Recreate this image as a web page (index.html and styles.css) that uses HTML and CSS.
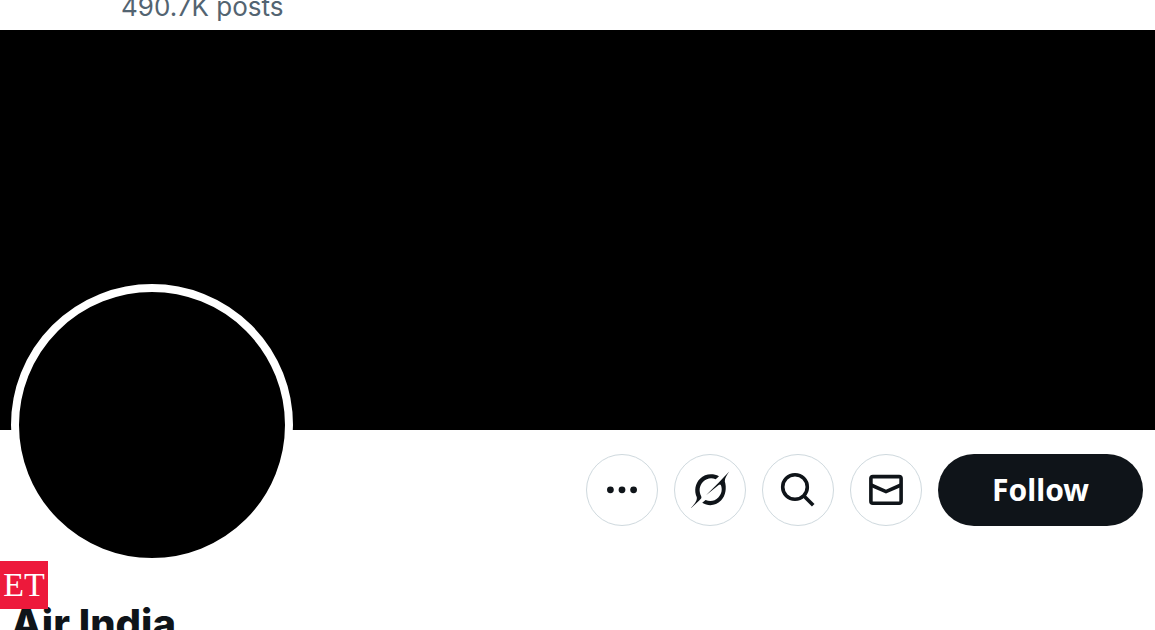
FILE: index.html
```html
<!DOCTYPE html>
<html lang="en">
<head>
    <meta charset="UTF-8">
    <meta name="viewport" content="width=device-width, initial-scale=1.0">
    <title>Air India</title>
    <link rel="stylesheet" href="styles.css">
</head>
<body>

    <!-- Top bar -->
    <header class="top-bar">
        <p class="post-count">490.7K posts</p>
    </header>

    <main class="profile">
        <div class="banner"></div>

        <div class="profile-row">
            <div class="avatar"></div>

            <div class="actions">
                <button class="icon-btn" type="button" aria-label="More">
                    <svg viewBox="0 0 40 40">
                        <circle cx="8.4" cy="19.8" r="3.4"/>
                        <circle cx="20" cy="19.8" r="3.4"/>
                        <circle cx="31.6" cy="19.8" r="3.4"/>
                    </svg>
                </button>
                <button class="icon-btn" type="button" aria-label="Grok">
                    <svg viewBox="0 0 40 40">
                        <path d="M0.7 38.4C3.6 34.6 7.4 31.3 6.8 27.2C3.8 20.5 5.3 13.4 10 8.7C15 3.7 22.6 3 29 6.2L25.7 9.3C21.2 7.4 16.6 8.3 13.1 11.8C9.3 15.6 8.6 21.1 11.2 26.2C12 27.9 10.7 29 9.5 30.2Z"/>
                        <path d="M16 25.2L28.8 12.4C31.8 9.4 35.5 5.5 39.2 1.6C37 5.2 34.8 7.8 34.8 11.2C36.8 17.8 35.8 25.6 31 30.5C25.8 35.8 18.4 36.6 12.2 32.8L15.6 29.9C20 32 24.8 31.1 28.3 27.5C31.8 23.9 32.6 19.2 30.8 15.1C30.4 14.2 29.6 14.3 28.7 15Z"/>
                    </svg>
                </button>
                <button class="icon-btn" type="button" aria-label="Search">
                    <svg class="outline" viewBox="0 0 40 40">
                        <circle cx="17" cy="17" r="12.3"/>
                        <path d="M26 26L35.2 35.2"/>
                    </svg>
                </button>
                <button class="icon-btn" type="button" aria-label="Message">
                    <svg class="outline" viewBox="0 0 40 40">
                        <rect x="4.9" y="6.6" width="30.2" height="26.6" rx="2"/>
                        <path d="M5 15L20 21.6L35 15"/>
                    </svg>
                </button>
                <button class="follow-btn" type="button">Follow</button>
            </div>
        </div>

        <h1 class="name">Air India</h1>
    </main>

    <!-- Publisher badge -->
    <div class="et-badge">ET</div>

</body>
</html>
```

FILE: styles.css
```css
/* Body Styling */
body {
    margin: 0;
    height: 100vh;
    overflow: hidden;
    background-color: #fff;
    color: #0f1419;
    font-family: Inter, "Liberation Sans", sans-serif;
}

/* Top bar, scrolled so only the end of it shows */
.top-bar {
    display: flex;
    align-items: flex-end;
    height: 30px;
    padding-left: 121px;
    overflow: hidden;
}

.post-count {
    margin: 0 0 7px;
    color: #536471;
    font-size: 26px;
    line-height: 32px;
}

/* Profile header */
.banner {
    height: 400px;
    background-color: #000;
}

.profile-row {
    display: flex;
    justify-content: space-between;
    align-items: flex-start;
    padding: 0 12px 0 11px;
}

.avatar {
    flex-shrink: 0;
    width: 266px;
    height: 266px;
    margin-top: -146px;
    border: 8px solid #fff;
    border-radius: 50%;
    background-color: #000;
}

.actions {
    display: flex;
    gap: 16px;
    padding-top: 24px;
}

.icon-btn {
    display: flex;
    justify-content: center;
    align-items: center;
    width: 72px;
    height: 72px;
    padding: 0;
    border: 1px solid #cfd9de;
    border-radius: 50%;
    background-color: #fff;
    cursor: pointer;
}

.icon-btn svg {
    width: 40px;
    height: 40px;
    fill: #0f1419;
}

.icon-btn .outline {
    fill: none;
    stroke: #0f1419;
    stroke-width: 3.6;
}

.follow-btn {
    height: 72px;
    padding: 0 54px 2px;
    border: none;
    border-radius: 36px;
    background-color: #0f1419;
    color: #fff;
    font-family: "Noto Sans", sans-serif;
    font-size: 30px;
    font-weight: bold;
    cursor: pointer;
}

.name {
    margin: 34px 11px 0;
    font-size: 40px;
    font-weight: 800;
    line-height: 48px;
}

/* Publisher badge over the bottom left corner */
.et-badge {
    position: fixed;
    left: 0;
    bottom: 21px;
    width: 48px;
    height: 48px;
    background-color: #ed193b;
    color: #fff;
    font-family: "Liberation Serif", serif;
    font-size: 34px;
    line-height: 48px;
    text-align: center;
}
```
